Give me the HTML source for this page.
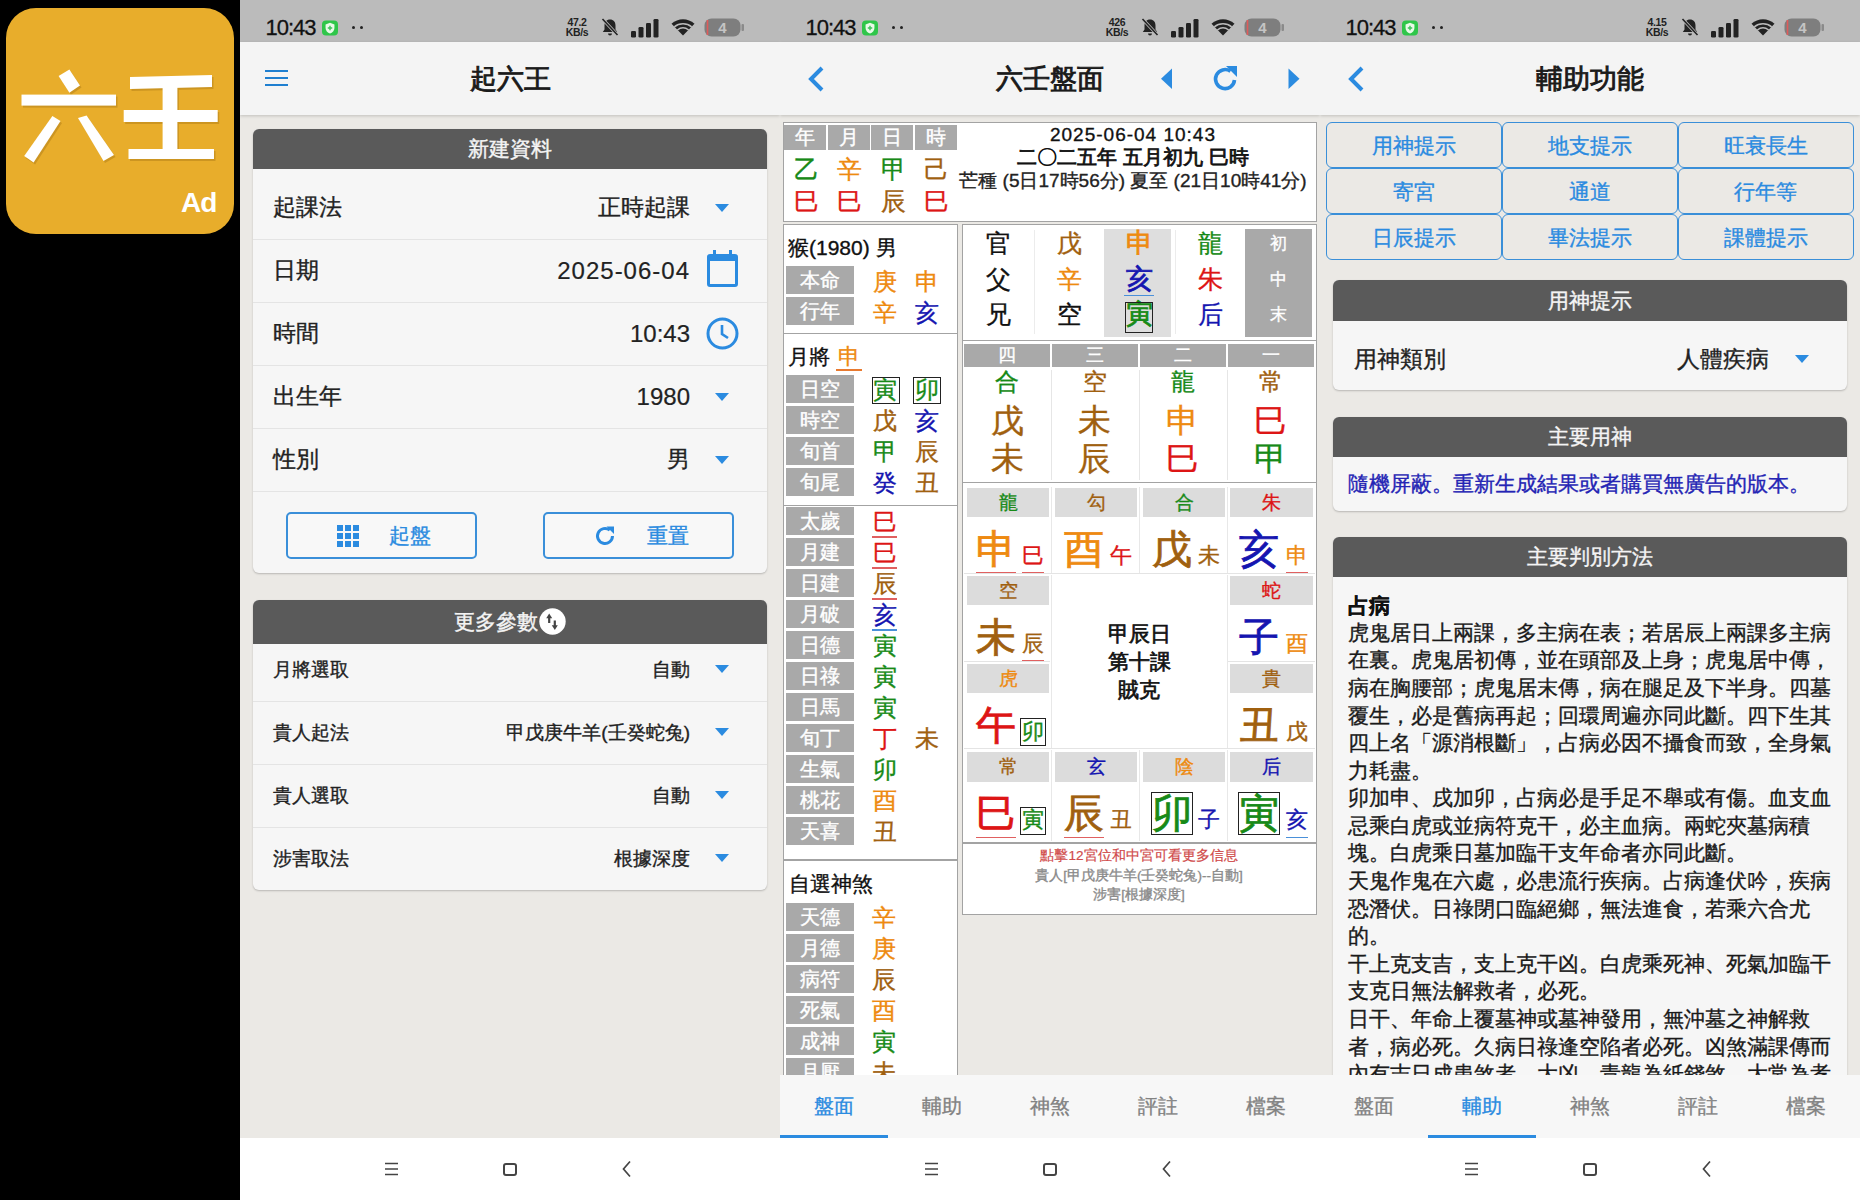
<!DOCTYPE html>
<html><head><meta charset="utf-8">
<style>
*{box-sizing:border-box;margin:0;padding:0}
html,body{width:1860px;height:1200px;overflow:hidden;background:#000;font-family:"Liberation Sans",sans-serif;color:#222}
.abs{position:absolute}
.scr{position:absolute;top:0;width:540px;height:1200px;background:#ebe9e5;overflow:hidden}
.sb{position:absolute;left:0;top:0;width:540px;height:42px;background:#bbbbbb}
.sb .tm{position:absolute;left:25.5px;top:14.8px;font-size:22px;line-height:26px;color:#111;letter-spacing:-1px;-webkit-text-stroke:0.3px #111}
.ab{position:absolute;left:0;top:42px;width:540px;height:73px;background:#f4f4f4;box-shadow:0 1px 3px rgba(0,0,0,.18)}
.ttl{position:absolute;left:0;width:540px;top:20px;text-align:center;font-size:27px;line-height:34px;color:#1a1a1a;-webkit-text-stroke:0.9px #1a1a1a}
.nav{position:absolute;left:0;top:1138px;width:540px;height:62px;background:#fff}
.card{position:absolute;background:#f6f6f6;border-radius:6px;box-shadow:0 1px 2px rgba(0,0,0,.22);overflow:hidden}
.ch{position:absolute;left:0;top:0;width:100%;background:#5a5a5a;color:#f4f4f4;text-align:center;-webkit-text-stroke:0.4px #f4f4f4}
.t{position:absolute;white-space:nowrap;-webkit-text-stroke:0.35px currentColor}
.c{position:absolute;white-space:nowrap;text-align:center;-webkit-text-stroke:0.35px currentColor}
.tri{position:absolute;width:0;height:0;border-left:7.5px solid transparent;border-right:7.5px solid transparent;border-top:8px solid #2b8be0}
.btn{position:absolute;border:2px solid #3a8fd9;border-radius:5px;background:#f8f8f8}
.box{position:absolute;background:#fff;border:1.5px solid #a3a3a3}
.lb{position:absolute;background:#a9a9a9;color:#fff;text-align:center;white-space:nowrap;-webkit-text-stroke:0.4px #fff}
.hl{position:absolute;height:1px;background:#e4e4e4}
</style></head><body>
<div class="abs" style="left:6px;top:8px;width:228px;height:226px;background:#e8ad2b;border-radius:30px"></div>
<svg class="abs" style="left:0;top:0" width="240" height="240" viewBox="0 0 240 240"><g fill="#9a6a10" opacity="0.35" transform="translate(1.5,2)"><polygon points="58.6,76 69.4,69.4 80,85.5 69.4,92.7"/><rect x="21.5" y="94.6" width="94.5" height="11"/><polygon points="52.4,116 60.5,121 33.6,162.6 24.2,156"/><polygon points="78,118 86.6,115.6 114,155 103.5,161"/><polygon points="130,77 212,75 212,87 130,89"/><rect x="123.7" y="110" width="94" height="12"/><rect x="128.5" y="149" width="85.5" height="10"/><rect x="162.6" y="86" width="14.8" height="64"/></g><g fill="#ffffff"><polygon points="58.6,76 69.4,69.4 80,85.5 69.4,92.7"/><rect x="21.5" y="94.6" width="94.5" height="11"/><polygon points="52.4,116 60.5,121 33.6,162.6 24.2,156"/><polygon points="78,118 86.6,115.6 114,155 103.5,161"/><polygon points="130,77 212,75 212,87 130,89"/><rect x="123.7" y="110" width="94" height="12"/><rect x="128.5" y="149" width="85.5" height="10"/><rect x="162.6" y="86" width="14.8" height="64"/></g></svg>
<div class="abs" style="left:181px;top:186px;font-size:28px;line-height:34px;color:#fff;font-weight:bold;letter-spacing:-1px;white-space:nowrap">Ad</div>
<div class="scr" style="left:240px">
<div class="sb"><div class="tm">10:43</div>
<svg class="abs" style="left:82px;top:19.5px" width="16" height="16" viewBox="0 0 18 17"><rect x="0" y="0" width="18" height="17" rx="4.5" fill="#2fc64a"/><path d="M9 2.5 L14 4.5 V8.5 C14 11.5 11.8 13.6 9 14.8 C6.2 13.6 4 11.5 4 8.5 V4.5 Z" fill="#e9fbe9"/><path d="M9 6 V11 M6.5 8.5 H11.5" stroke="#3cc35a" stroke-width="1.6"/></svg>
<div class="abs" style="left:112px;top:26px;width:3px;height:3px;border-radius:2px;background:#222"></div><div class="abs" style="left:120px;top:26px;width:3px;height:3px;border-radius:2px;background:#222"></div>
<div class="abs" style="left:322px;top:18px;width:30px;font-size:10.5px;line-height:9.5px;font-weight:bold;color:#222;text-align:center;letter-spacing:-0.3px">47.2<br>KB/s</div>
<svg class="abs" style="left:360px;top:17px" width="20" height="20" viewBox="0 0 20 20"><path d="M10 2.5 C6.5 2.5 4.5 5 4.5 8.5 V12.5 L2.8 15 H17.2 L15.5 12.5 V8.5 C15.5 5 13.5 2.5 10 2.5 Z" fill="#222"/><path d="M8 16.5 A2 2 0 0 0 12 16.5 Z" fill="#222"/><path d="M2.5 2 L17.5 18" stroke="#bbbbbb" stroke-width="3.2"/><path d="M2.5 2 L17.5 18" stroke="#222" stroke-width="1.6"/></svg>
<svg class="abs" style="left:390px;top:18px" width="30" height="20" viewBox="0 0 30 20"><rect x="1" y="13" width="5" height="6.5" rx="1.3" fill="#222"/><rect x="8.5" y="9" width="5" height="10.5" rx="1.3" fill="#222"/><rect x="16" y="5" width="5" height="14.5" rx="1.3" fill="#222"/><rect x="23.5" y="1" width="5" height="18.5" rx="1.3" fill="#222"/></svg>
<svg class="abs" style="left:431px;top:19px" width="24" height="17" viewBox="0 0 24 17"><path d="M12 16.5 L0.5 4.8 C7 -1.2 17 -1.2 23.5 4.8 Z" fill="#222"/><path d="M3.3 7.8 C8.2 3.8 15.8 3.8 20.7 7.8" fill="none" stroke="#bbbbbb" stroke-width="1.5"/><path d="M6.3 11 C9.8 8.2 14.2 8.2 17.7 11" fill="none" stroke="#bbbbbb" stroke-width="1.5"/></svg>
<svg class="abs" style="left:464px;top:18px" width="41" height="19" viewBox="0 0 41 19"><rect x="0.5" y="0.5" width="36" height="18" rx="7" fill="#7e7e7e"/><path d="M3.5 2 V17" stroke="#e05a5a" stroke-width="1.6"/><rect x="37.5" y="6" width="2.5" height="7" rx="1" fill="#8a8a8a"/><text x="18.5" y="15" font-size="15" font-family="Liberation Sans" font-weight="bold" fill="#c4c4c4" text-anchor="middle">4</text></svg>
</div>
<div class="ab"><div class="ttl">起六王</div><div class="abs" style="left:25px;top:28px;width:23px;height:16px;border-top:2.5px solid #1f7fd0;border-bottom:2.5px solid #1f7fd0"></div><div class="abs" style="left:25px;top:34.7px;width:23px;height:2.5px;background:#1f7fd0"></div></div>
<div class="card" style="left:13px;top:129px;width:514px;height:444px"><div class="ch" style="height:40px;font-size:21px;line-height:40px">新建資料</div></div>
<div class="hl" style="left:13px;top:239px;width:514px"></div>
<div class="hl" style="left:13px;top:302px;width:514px"></div>
<div class="hl" style="left:13px;top:365px;width:514px"></div>
<div class="hl" style="left:13px;top:428px;width:514px"></div>
<div class="hl" style="left:13px;top:491px;width:514px"></div>
<div class="t" style="left:33px;top:196.0px;font-size:23px;line-height:23px;color:#222;">起課法</div>
<div class="t" style="right:90px;top:196.0px;font-size:23px;line-height:23px;color:#222;">正時起課</div>
<div class="tri" style="left:475px;top:203.5px;border-top-color:#2b8be0"></div>
<div class="t" style="left:33px;top:259.0px;font-size:23px;line-height:23px;color:#222;">日期</div>
<div class="t" style="right:90px;top:258.5px;font-size:24px;line-height:24px;color:#222;letter-spacing:1px;-webkit-text-stroke:0.2px #222">2025-06-04</div>
<div class="t" style="left:33px;top:322.0px;font-size:23px;line-height:23px;color:#222;">時間</div>
<div class="t" style="right:90px;top:321.5px;font-size:24px;line-height:24px;color:#222;letter-spacing:0px;-webkit-text-stroke:0.2px #222">10:43</div>
<div class="t" style="left:33px;top:385.0px;font-size:23px;line-height:23px;color:#222;">出生年</div>
<div class="t" style="right:90px;top:384.5px;font-size:24px;line-height:24px;color:#222;letter-spacing:0px;-webkit-text-stroke:0.2px #222">1980</div>
<div class="tri" style="left:475px;top:392.5px;border-top-color:#2b8be0"></div>
<div class="t" style="left:33px;top:448.0px;font-size:23px;line-height:23px;color:#222;">性別</div>
<div class="t" style="right:90px;top:448.0px;font-size:23px;line-height:23px;color:#222;">男</div>
<div class="tri" style="left:475px;top:455.5px;border-top-color:#2b8be0"></div>
<div class="abs" style="left:467px;top:254px;width:31px;height:33px;border:3px solid #2b8be0;border-top-width:7px;border-radius:3px"></div>
<div class="abs" style="left:473px;top:250px;width:3px;height:6px;background:#2b8be0"></div><div class="abs" style="left:489px;top:250px;width:3px;height:6px;background:#2b8be0"></div>
<svg class="abs" style="left:466px;top:317px" width="33" height="33" viewBox="0 0 33 33"><circle cx="16.5" cy="16.5" r="14.5" fill="none" stroke="#2b8be0" stroke-width="3"/><path d="M16 8 V17 L22 21" fill="none" stroke="#2b8be0" stroke-width="2.6"/></svg>
<div class="btn" style="left:46px;top:512px;width:191px;height:47px"></div>
<div class="btn" style="left:303px;top:512px;width:191px;height:47px"></div>
<svg class="abs" style="left:97px;top:525px" width="22" height="22" viewBox="0 0 22 22"><rect x="0" y="0" width="6" height="6" fill="#2b8be0"/><rect x="8" y="0" width="6" height="6" fill="#2b8be0"/><rect x="16" y="0" width="6" height="6" fill="#2b8be0"/><rect x="0" y="8" width="6" height="6" fill="#2b8be0"/><rect x="8" y="8" width="6" height="6" fill="#2b8be0"/><rect x="16" y="8" width="6" height="6" fill="#2b8be0"/><rect x="0" y="16" width="6" height="6" fill="#2b8be0"/><rect x="8" y="16" width="6" height="6" fill="#2b8be0"/><rect x="16" y="16" width="6" height="6" fill="#2b8be0"/></svg>
<div class="t" style="left:149px;top:525.0px;font-size:21px;line-height:21px;color:#2b8be0;">起盤</div>
<svg class="abs" style="left:353px;top:524px" width="24" height="24" viewBox="0 0 24 24"><path d="M19.5 12 A7.5 7.5 0 1 1 16.8 6.2" fill="none" stroke="#2b8be0" stroke-width="3"/><path d="M13.5 2.5 L21 2.5 L21 10 Z" fill="#2b8be0"/></svg>
<div class="t" style="left:407px;top:525.0px;font-size:21px;line-height:21px;color:#2b8be0;">重置</div>
<div class="card" style="left:13px;top:600px;width:514px;height:290px"><div class="ch" style="height:44px;font-size:21px;line-height:44px;padding-right:28px">更多參數</div></div>
<svg class="abs" style="left:299px;top:608px" width="27" height="27" viewBox="0 0 27 27"><circle cx="13.5" cy="13.5" r="13.2" fill="#fff"/><path d="M10.2 9 V15" stroke="#444" stroke-width="2.2"/><path d="M7.2 10.3 L13.2 10.3 L10.2 5.6 Z" fill="#444"/><path d="M15.8 12.5 V18.5" stroke="#444" stroke-width="2.2"/><path d="M12.8 17.2 L18.8 17.2 L15.8 21.9 Z" fill="#444"/></svg>
<div class="hl" style="left:13px;top:701px;width:514px"></div>
<div class="hl" style="left:13px;top:764px;width:514px"></div>
<div class="hl" style="left:13px;top:827px;width:514px"></div>
<div class="t" style="left:33px;top:659.5px;font-size:19px;line-height:19px;color:#222;">月將選取</div>
<div class="t" style="right:90px;top:659.5px;font-size:19px;line-height:19px;color:#222;">自動</div>
<div class="tri" style="left:475px;top:665px;border-top-color:#2b8be0"></div>
<div class="t" style="left:33px;top:722.5px;font-size:19px;line-height:19px;color:#222;">貴人起法</div>
<div class="t" style="right:90px;top:722.5px;font-size:19px;line-height:19px;color:#222;">甲戊庚牛羊(壬癸蛇兔)</div>
<div class="tri" style="left:475px;top:728px;border-top-color:#2b8be0"></div>
<div class="t" style="left:33px;top:785.5px;font-size:19px;line-height:19px;color:#222;">貴人選取</div>
<div class="t" style="right:90px;top:785.5px;font-size:19px;line-height:19px;color:#222;">自動</div>
<div class="tri" style="left:475px;top:791px;border-top-color:#2b8be0"></div>
<div class="t" style="left:33px;top:848.5px;font-size:19px;line-height:19px;color:#222;">涉害取法</div>
<div class="t" style="right:90px;top:848.5px;font-size:19px;line-height:19px;color:#222;">根據深度</div>
<div class="tri" style="left:475px;top:854px;border-top-color:#2b8be0"></div>
<div class="nav">
<svg class="abs" style="left:144px;top:24px" width="15" height="14" viewBox="0 0 15 14"><path d="M1 1.5 H14 M1 7 H14 M1 12.5 H14" stroke="#444" stroke-width="1.6"/></svg>
<div class="abs" style="left:263px;top:25px;width:14px;height:13px;border:2px solid #444;border-radius:3px"></div>
<svg class="abs" style="left:381px;top:22px" width="11" height="18" viewBox="0 0 11 18"><path d="M9 1.5 L2.5 9 L9 16.5" fill="none" stroke="#444" stroke-width="1.7"/></svg>
</div>
</div>
<div class="scr" style="left:780px">
<div class="sb"><div class="tm">10:43</div>
<svg class="abs" style="left:82px;top:19.5px" width="16" height="16" viewBox="0 0 18 17"><rect x="0" y="0" width="18" height="17" rx="4.5" fill="#2fc64a"/><path d="M9 2.5 L14 4.5 V8.5 C14 11.5 11.8 13.6 9 14.8 C6.2 13.6 4 11.5 4 8.5 V4.5 Z" fill="#e9fbe9"/><path d="M9 6 V11 M6.5 8.5 H11.5" stroke="#3cc35a" stroke-width="1.6"/></svg>
<div class="abs" style="left:112px;top:26px;width:3px;height:3px;border-radius:2px;background:#222"></div><div class="abs" style="left:120px;top:26px;width:3px;height:3px;border-radius:2px;background:#222"></div>
<div class="abs" style="left:322px;top:18px;width:30px;font-size:10.5px;line-height:9.5px;font-weight:bold;color:#222;text-align:center;letter-spacing:-0.3px">426<br>KB/s</div>
<svg class="abs" style="left:360px;top:17px" width="20" height="20" viewBox="0 0 20 20"><path d="M10 2.5 C6.5 2.5 4.5 5 4.5 8.5 V12.5 L2.8 15 H17.2 L15.5 12.5 V8.5 C15.5 5 13.5 2.5 10 2.5 Z" fill="#222"/><path d="M8 16.5 A2 2 0 0 0 12 16.5 Z" fill="#222"/><path d="M2.5 2 L17.5 18" stroke="#bbbbbb" stroke-width="3.2"/><path d="M2.5 2 L17.5 18" stroke="#222" stroke-width="1.6"/></svg>
<svg class="abs" style="left:390px;top:18px" width="30" height="20" viewBox="0 0 30 20"><rect x="1" y="13" width="5" height="6.5" rx="1.3" fill="#222"/><rect x="8.5" y="9" width="5" height="10.5" rx="1.3" fill="#222"/><rect x="16" y="5" width="5" height="14.5" rx="1.3" fill="#222"/><rect x="23.5" y="1" width="5" height="18.5" rx="1.3" fill="#222"/></svg>
<svg class="abs" style="left:431px;top:19px" width="24" height="17" viewBox="0 0 24 17"><path d="M12 16.5 L0.5 4.8 C7 -1.2 17 -1.2 23.5 4.8 Z" fill="#222"/><path d="M3.3 7.8 C8.2 3.8 15.8 3.8 20.7 7.8" fill="none" stroke="#bbbbbb" stroke-width="1.5"/><path d="M6.3 11 C9.8 8.2 14.2 8.2 17.7 11" fill="none" stroke="#bbbbbb" stroke-width="1.5"/></svg>
<svg class="abs" style="left:464px;top:18px" width="41" height="19" viewBox="0 0 41 19"><rect x="0.5" y="0.5" width="36" height="18" rx="7" fill="#7e7e7e"/><path d="M3.5 2 V17" stroke="#e05a5a" stroke-width="1.6"/><rect x="37.5" y="6" width="2.5" height="7" rx="1" fill="#8a8a8a"/><text x="18.5" y="15" font-size="15" font-family="Liberation Sans" font-weight="bold" fill="#c4c4c4" text-anchor="middle">4</text></svg>
</div>
<div class="ab"><div class="ttl">六壬盤面</div><svg class="abs" style="left:26px;top:23px" width="20" height="28" viewBox="0 0 20 28"><path d="M16 3 L5 14 L16 25" fill="none" stroke="#2b8be0" stroke-width="4"/></svg><svg class="abs" style="left:380px;top:25px" width="14" height="24" viewBox="0 0 14 24"><path d="M12 1.5 V22 L1 11.75 Z" fill="#2b8be0"/></svg><svg class="abs" style="left:431px;top:22px" width="29" height="30" viewBox="0 0 29 30"><path d="M23.5 16 A9.5 9.5 0 1 1 19.5 7.3" fill="none" stroke="#2b8be0" stroke-width="3.6"/><path d="M15 2 L26 2 L26 13 Z" fill="#2b8be0"/></svg><svg class="abs" style="left:507px;top:25px" width="14" height="24" viewBox="0 0 14 24"><path d="M1.5 1.5 V22 L12.5 11.75 Z" fill="#2b8be0"/></svg></div>
<div class="box" style="left:3px;top:122px;width:534px;height:100px"></div>
<div class="lb" style="left:4px;top:125px;width:42px;height:24.5px;font-size:20px;line-height:25px">年</div>
<div class="lb" style="left:48px;top:125px;width:41.5px;height:24.5px;font-size:20px;line-height:25px">月</div>
<div class="lb" style="left:91.2px;top:125px;width:41.8px;height:24.5px;font-size:20px;line-height:25px">日</div>
<div class="lb" style="left:135px;top:125px;width:41.8px;height:24.5px;font-size:20px;line-height:25px">時</div>
<div class="c" style="left:-11.5px;width:75px;top:157.0px;font-size:25px;line-height:25px;color:#178a17;">乙</div>
<div class="c" style="left:31.5px;width:75px;top:157.0px;font-size:25px;line-height:25px;color:#ee8a10;">辛</div>
<div class="c" style="left:75.5px;width:75px;top:157.0px;font-size:25px;line-height:25px;color:#178a17;">甲</div>
<div class="c" style="left:119.0px;width:75px;top:157.0px;font-size:25px;line-height:25px;color:#a0600f;">己</div>
<div class="c" style="left:-11.5px;width:75px;top:188.5px;font-size:25px;line-height:25px;color:#dd1515;">巳</div>
<div class="c" style="left:31.5px;width:75px;top:188.5px;font-size:25px;line-height:25px;color:#dd1515;">巳</div>
<div class="c" style="left:75.5px;width:75px;top:188.5px;font-size:25px;line-height:25px;color:#a0600f;">辰</div>
<div class="c" style="left:119.0px;width:75px;top:188.5px;font-size:25px;line-height:25px;color:#dd1515;">巳</div>
<div class="c" style="left:183.0px;width:340px;top:124.5px;font-size:19px;line-height:19px;color:#111;letter-spacing:1px">2025-06-04 10:43</div>
<div class="c" style="left:183.0px;width:340px;top:147.0px;font-size:20px;line-height:20px;color:#111;-webkit-text-stroke:0.8px #111">二〇二五年 五月初九 巳時</div>
<div class="c" style="left:173.0px;width:360px;top:171.0px;font-size:19px;line-height:19px;color:#222;letter-spacing:0px">芒種 (5日17時56分) 夏至 (21日10時41分)</div>
<div class="box" style="left:3px;top:224px;width:175px;height:1000px"></div>
<div class="abs" style="left:3px;top:332.5px;width:175px;height:1.6px;background:#a3a3a3"></div>
<div class="abs" style="left:3px;top:504.5px;width:175px;height:1.6px;background:#a3a3a3"></div>
<div class="abs" style="left:3px;top:859px;width:175px;height:1.6px;background:#a3a3a3"></div>
<div class="t" style="left:8px;top:236.5px;font-size:21px;line-height:21px;color:#111;">猴(1980) 男</div>
<div class="lb" style="left:6px;top:266px;width:68px;height:28px;font-size:20px;line-height:28px">本命</div><div class="lb" style="left:6px;top:297px;width:68px;height:28px;font-size:20px;line-height:28px">行年</div>
<div class="c" style="left:69.0px;width:72px;top:270.0px;font-size:24px;line-height:24px;color:#ee8a10;">庚</div><div class="c" style="left:110.6px;width:72px;top:270.0px;font-size:24px;line-height:24px;color:#ee8a10;">申</div><div class="c" style="left:69.0px;width:72px;top:301.0px;font-size:24px;line-height:24px;color:#ee8a10;">辛</div><div class="c" style="left:110.6px;width:72px;top:301.0px;font-size:24px;line-height:24px;color:#1515b0;">亥</div>
<div class="t" style="left:8px;top:346.1px;font-size:21px;line-height:21px;color:#111;">月將</div><div class="c" style="left:35.5px;width:66px;top:345.6px;font-size:22px;line-height:22px;color:#ee8a10;">申</div><div class="abs" style="left:55.5px;top:369px;width:26px;height:1.6px;background:#e87a30"></div>
<div class="lb" style="left:6px;top:375px;width:68px;height:28px;font-size:20px;line-height:28px">日空</div><div class="c" style="left:69.0px;width:72px;top:378.0px;font-size:24px;line-height:24px;color:#178a17;">寅</div><div class="c" style="left:110.6px;width:72px;top:378.0px;font-size:24px;line-height:24px;color:#178a17;">卯</div>
<div class="lb" style="left:6px;top:406px;width:68px;height:28px;font-size:20px;line-height:28px">時空</div><div class="c" style="left:69.0px;width:72px;top:409.0px;font-size:24px;line-height:24px;color:#a0600f;">戊</div><div class="c" style="left:110.6px;width:72px;top:409.0px;font-size:24px;line-height:24px;color:#1515b0;">亥</div>
<div class="lb" style="left:6px;top:437px;width:68px;height:28px;font-size:20px;line-height:28px">旬首</div><div class="c" style="left:69.0px;width:72px;top:440.0px;font-size:24px;line-height:24px;color:#178a17;">甲</div><div class="c" style="left:110.6px;width:72px;top:440.0px;font-size:24px;line-height:24px;color:#a0600f;">辰</div>
<div class="lb" style="left:6px;top:468px;width:68px;height:28px;font-size:20px;line-height:28px">旬尾</div><div class="c" style="left:69.0px;width:72px;top:471.0px;font-size:24px;line-height:24px;color:#1515b0;">癸</div><div class="c" style="left:110.6px;width:72px;top:471.0px;font-size:24px;line-height:24px;color:#a0600f;">丑</div>
<div class="abs" style="left:91.5px;top:376.5px;width:28px;height:27px;border:1.5px solid #222"></div><div class="abs" style="left:133px;top:376.5px;width:28px;height:27px;border:1.5px solid #222"></div>
<div class="lb" style="left:6px;top:507px;width:68px;height:28px;font-size:20px;line-height:28px">太歲</div><div class="c" style="left:68.8px;width:72px;top:510.0px;font-size:24px;line-height:24px;color:#dd1515;">巳</div>
<div class="abs" style="left:92.3px;top:536px;width:25px;height:1.6px;background:#e06060"></div>
<div class="lb" style="left:6px;top:538px;width:68px;height:28px;font-size:20px;line-height:28px">月建</div><div class="c" style="left:68.8px;width:72px;top:541.0px;font-size:24px;line-height:24px;color:#dd1515;">巳</div>
<div class="abs" style="left:92.3px;top:567px;width:25px;height:1.6px;background:#e06060"></div>
<div class="lb" style="left:6px;top:569px;width:68px;height:28px;font-size:20px;line-height:28px">日建</div><div class="c" style="left:68.8px;width:72px;top:572.0px;font-size:24px;line-height:24px;color:#a0600f;">辰</div>
<div class="abs" style="left:92.3px;top:598px;width:25px;height:1.6px;background:#e06060"></div>
<div class="lb" style="left:6px;top:600px;width:68px;height:28px;font-size:20px;line-height:28px">月破</div><div class="c" style="left:68.8px;width:72px;top:603.0px;font-size:24px;line-height:24px;color:#1515b0;">亥</div>
<div class="abs" style="left:92.3px;top:629px;width:25px;height:1.6px;background:#4a90d9"></div>
<div class="lb" style="left:6px;top:631px;width:68px;height:28px;font-size:20px;line-height:28px">日德</div><div class="c" style="left:68.8px;width:72px;top:634.0px;font-size:24px;line-height:24px;color:#178a17;">寅</div>
<div class="lb" style="left:6px;top:662px;width:68px;height:28px;font-size:20px;line-height:28px">日祿</div><div class="c" style="left:68.8px;width:72px;top:665.0px;font-size:24px;line-height:24px;color:#178a17;">寅</div>
<div class="lb" style="left:6px;top:693px;width:68px;height:28px;font-size:20px;line-height:28px">日馬</div><div class="c" style="left:68.8px;width:72px;top:696.0px;font-size:24px;line-height:24px;color:#178a17;">寅</div>
<div class="lb" style="left:6px;top:724px;width:68px;height:28px;font-size:20px;line-height:28px">旬丁</div><div class="c" style="left:68.8px;width:72px;top:727.0px;font-size:24px;line-height:24px;color:#dd1515;">丁</div>
<div class="lb" style="left:6px;top:755px;width:68px;height:28px;font-size:20px;line-height:28px">生氣</div><div class="c" style="left:68.8px;width:72px;top:758.0px;font-size:24px;line-height:24px;color:#178a17;">卯</div>
<div class="lb" style="left:6px;top:786px;width:68px;height:28px;font-size:20px;line-height:28px">桃花</div><div class="c" style="left:68.8px;width:72px;top:789.0px;font-size:24px;line-height:24px;color:#ee8a10;">酉</div>
<div class="lb" style="left:6px;top:817px;width:68px;height:28px;font-size:20px;line-height:28px">天喜</div><div class="c" style="left:68.8px;width:72px;top:820.0px;font-size:24px;line-height:24px;color:#a0600f;">丑</div>
<div class="c" style="left:110.5px;width:72px;top:727.0px;font-size:24px;line-height:24px;color:#a0600f;">未</div>
<div class="t" style="left:9px;top:873.0px;font-size:21px;line-height:21px;color:#111;">自選神煞</div>
<div class="lb" style="left:6px;top:903px;width:68px;height:28px;font-size:20px;line-height:28px">天德</div><div class="c" style="left:68.4px;width:72px;top:906.0px;font-size:24px;line-height:24px;color:#ee8a10;">辛</div>
<div class="lb" style="left:6px;top:934px;width:68px;height:28px;font-size:20px;line-height:28px">月德</div><div class="c" style="left:68.4px;width:72px;top:937.0px;font-size:24px;line-height:24px;color:#ee8a10;">庚</div>
<div class="lb" style="left:6px;top:965px;width:68px;height:28px;font-size:20px;line-height:28px">病符</div><div class="c" style="left:68.4px;width:72px;top:968.0px;font-size:24px;line-height:24px;color:#a0600f;">辰</div>
<div class="lb" style="left:6px;top:996px;width:68px;height:28px;font-size:20px;line-height:28px">死氣</div><div class="c" style="left:68.4px;width:72px;top:999.0px;font-size:24px;line-height:24px;color:#ee8a10;">酉</div>
<div class="lb" style="left:6px;top:1027px;width:68px;height:28px;font-size:20px;line-height:28px">成神</div><div class="c" style="left:68.4px;width:72px;top:1030.0px;font-size:24px;line-height:24px;color:#178a17;">寅</div>
<div class="lb" style="left:6px;top:1058px;width:68px;height:28px;font-size:20px;line-height:28px">月厭</div><div class="c" style="left:68.4px;width:72px;top:1061.0px;font-size:24px;line-height:24px;color:#a0600f;">未</div>
<div class="box" style="left:182px;top:224px;width:355px;height:691px"></div>
<div class="abs" style="left:324px;top:228.5px;width:67px;height:108px;background:#dedede"></div><div class="abs" style="left:464.5px;top:228.5px;width:67px;height:108px;background:#a9a9a9"></div>
<div class="abs" style="left:254px;top:230px;width:1px;height:104px;background:#ececec"></div><div class="abs" style="left:395px;top:230px;width:1px;height:104px;background:#ececec"></div>
<div class="c" style="left:181.4px;width:75px;top:231.1px;font-size:25px;line-height:25px;color:#111;">官</div>
<div class="c" style="left:252.3px;width:75px;top:231.1px;font-size:25px;line-height:25px;color:#a0600f;">戊</div>
<div class="c" style="left:318.5px;width:81px;top:230.1px;font-size:27px;line-height:27px;color:#ee8a10;-webkit-text-stroke:0.8px #ee8a10">申</div>
<div class="c" style="left:392.9px;width:75px;top:231.1px;font-size:25px;line-height:25px;color:#178a17;">龍</div>
<div class="c" style="left:181.4px;width:75px;top:267.1px;font-size:25px;line-height:25px;color:#111;">父</div>
<div class="c" style="left:252.3px;width:75px;top:267.1px;font-size:25px;line-height:25px;color:#ee8a10;">辛</div>
<div class="c" style="left:318.5px;width:81px;top:266.1px;font-size:27px;line-height:27px;color:#1515b0;-webkit-text-stroke:0.8px #1515b0">亥</div>
<div class="c" style="left:392.9px;width:75px;top:267.1px;font-size:25px;line-height:25px;color:#dd1515;">朱</div>
<div class="c" style="left:181.4px;width:75px;top:302.0px;font-size:25px;line-height:25px;color:#111;">兄</div>
<div class="c" style="left:252.3px;width:75px;top:302.0px;font-size:25px;line-height:25px;color:#111;">空</div>
<div class="c" style="left:318.5px;width:81px;top:301.0px;font-size:27px;line-height:27px;color:#178a17;-webkit-text-stroke:0.8px #178a17">寅</div>
<div class="c" style="left:392.9px;width:75px;top:302.0px;font-size:25px;line-height:25px;color:#1515b0;">后</div>
<div class="abs" style="left:344.0px;top:294.5px;width:30px;height:1.6px;background:#4a90d9"></div>
<div class="abs" style="left:345px;top:301.5px;width:28px;height:31px;border:1.5px solid #222"></div>
<div class="c" style="left:472.5px;width:51px;top:235.1px;font-size:17px;line-height:17px;color:#fff;">初</div>
<div class="c" style="left:472.5px;width:51px;top:271.1px;font-size:17px;line-height:17px;color:#fff;">中</div>
<div class="c" style="left:472.5px;width:51px;top:306.0px;font-size:17px;line-height:17px;color:#fff;">末</div>
<div class="abs" style="left:182px;top:339.5px;width:355px;height:1.6px;background:#a3a3a3"></div>
<div class="lb" style="left:184px;top:344px;width:86px;height:23px;font-size:18px;line-height:23px">四</div>
<div class="lb" style="left:271.5px;top:344px;width:86px;height:23px;font-size:18px;line-height:23px">三</div>
<div class="lb" style="left:359.5px;top:344px;width:86px;height:23px;font-size:18px;line-height:23px">二</div>
<div class="lb" style="left:447.5px;top:344px;width:86px;height:23px;font-size:18px;line-height:23px">一</div>
<div class="c" style="left:191.0px;width:72px;top:370.0px;font-size:24px;line-height:24px;color:#178a17;">合</div><div class="c" style="left:177.5px;width:99px;top:403.5px;font-size:33px;line-height:33px;color:#a0600f;">戊</div><div class="c" style="left:177.5px;width:99px;top:442.0px;font-size:33px;line-height:33px;color:#a0600f;">未</div>
<div class="c" style="left:278.5px;width:72px;top:370.0px;font-size:24px;line-height:24px;color:#a0600f;">空</div><div class="c" style="left:265.0px;width:99px;top:403.5px;font-size:33px;line-height:33px;color:#a0600f;">未</div><div class="c" style="left:265.0px;width:99px;top:442.0px;font-size:33px;line-height:33px;color:#a0600f;">辰</div>
<div class="c" style="left:366.5px;width:72px;top:370.0px;font-size:24px;line-height:24px;color:#178a17;">龍</div><div class="c" style="left:353.0px;width:99px;top:403.5px;font-size:33px;line-height:33px;color:#ee8a10;">申</div><div class="c" style="left:353.0px;width:99px;top:442.0px;font-size:33px;line-height:33px;color:#dd1515;">巳</div>
<div class="c" style="left:454.5px;width:72px;top:370.0px;font-size:24px;line-height:24px;color:#a0600f;">常</div><div class="c" style="left:441.0px;width:99px;top:403.5px;font-size:33px;line-height:33px;color:#dd1515;">巳</div><div class="c" style="left:441.0px;width:99px;top:442.0px;font-size:33px;line-height:33px;color:#178a17;">甲</div>
<div class="abs" style="left:270.5px;top:370px;width:1px;height:110px;background:#e6e6e6"></div>
<div class="abs" style="left:358.5px;top:370px;width:1px;height:110px;background:#e6e6e6"></div>
<div class="abs" style="left:446.5px;top:370px;width:1px;height:110px;background:#e6e6e6"></div>
<div class="abs" style="left:182px;top:481.5px;width:355px;height:1.6px;background:#a3a3a3"></div>
<div class="abs" style="left:186.7px;top:487.5px;width:82.5px;height:29.5px;background:#dcdcdc"></div><div class="c" style="left:199.5px;width:57px;top:492.8px;font-size:19px;line-height:19px;color:#178a17;">龍</div><div class="c" style="left:155.7px;width:120px;top:528.8px;font-size:40px;line-height:40px;color:#ee8a10;-webkit-text-stroke:0.8px #ee8a10">申</div><div class="c" style="left:220.0px;width:66px;top:544.8px;font-size:22px;line-height:22px;color:#dd1515;">巳</div><div class="abs" style="left:195.7px;top:572.0px;width:40px;height:1.6px;background:#e06060"></div><div class="abs" style="left:242.0px;top:572.0px;width:22px;height:1.6px;background:#e06060"></div>
<div class="abs" style="left:274.9px;top:487.5px;width:82.5px;height:29.5px;background:#dcdcdc"></div><div class="c" style="left:287.7px;width:57px;top:492.8px;font-size:19px;line-height:19px;color:#a0600f;">勾</div><div class="c" style="left:243.9px;width:120px;top:528.8px;font-size:40px;line-height:40px;color:#ee8a10;-webkit-text-stroke:0.8px #ee8a10">酉</div><div class="c" style="left:308.2px;width:66px;top:544.8px;font-size:22px;line-height:22px;color:#dd1515;">午</div>
<div class="abs" style="left:362.9px;top:487.5px;width:82.5px;height:29.5px;background:#dcdcdc"></div><div class="c" style="left:375.7px;width:57px;top:492.8px;font-size:19px;line-height:19px;color:#178a17;">合</div><div class="c" style="left:331.9px;width:120px;top:528.8px;font-size:40px;line-height:40px;color:#a0600f;-webkit-text-stroke:0.8px #a0600f">戊</div><div class="c" style="left:396.2px;width:66px;top:544.8px;font-size:22px;line-height:22px;color:#a0600f;">未</div>
<div class="abs" style="left:450.4px;top:487.5px;width:82.5px;height:29.5px;background:#dcdcdc"></div><div class="c" style="left:463.2px;width:57px;top:492.8px;font-size:19px;line-height:19px;color:#dd1515;">朱</div><div class="c" style="left:419.4px;width:120px;top:528.8px;font-size:40px;line-height:40px;color:#1515b0;-webkit-text-stroke:0.8px #1515b0">亥</div><div class="c" style="left:483.7px;width:66px;top:544.8px;font-size:22px;line-height:22px;color:#ee8a10;">申</div><div class="abs" style="left:505.70000000000005px;top:572.0px;width:22px;height:1.6px;background:#e06060"></div>
<div class="abs" style="left:186.7px;top:575.5px;width:82.5px;height:29.5px;background:#dcdcdc"></div><div class="c" style="left:199.5px;width:57px;top:580.8px;font-size:19px;line-height:19px;color:#a0600f;">空</div><div class="c" style="left:155.7px;width:120px;top:616.8px;font-size:40px;line-height:40px;color:#a0600f;-webkit-text-stroke:0.8px #a0600f">未</div><div class="c" style="left:220.0px;width:66px;top:632.8px;font-size:22px;line-height:22px;color:#a0600f;">辰</div><div class="abs" style="left:242.0px;top:660.0px;width:22px;height:1.6px;background:#e06060"></div>
<div class="abs" style="left:450.4px;top:575.5px;width:82.5px;height:29.5px;background:#dcdcdc"></div><div class="c" style="left:463.2px;width:57px;top:580.8px;font-size:19px;line-height:19px;color:#dd1515;">蛇</div><div class="c" style="left:419.4px;width:120px;top:616.8px;font-size:40px;line-height:40px;color:#1515b0;-webkit-text-stroke:0.8px #1515b0">子</div><div class="c" style="left:483.7px;width:66px;top:632.8px;font-size:22px;line-height:22px;color:#ee8a10;">酉</div>
<div class="abs" style="left:186.7px;top:663.5px;width:82.5px;height:29.5px;background:#dcdcdc"></div><div class="c" style="left:199.5px;width:57px;top:668.8px;font-size:19px;line-height:19px;color:#ee8a10;">虎</div><div class="c" style="left:155.7px;width:120px;top:704.8px;font-size:40px;line-height:40px;color:#dd1515;-webkit-text-stroke:0.8px #dd1515">午</div><div class="c" style="left:220.0px;width:66px;top:720.8px;font-size:22px;line-height:22px;color:#178a17;">卯</div><div class="abs" style="left:240.0px;top:718.3px;width:26px;height:28px;border:1.5px solid #222"></div>
<div class="abs" style="left:450.4px;top:663.5px;width:82.5px;height:29.5px;background:#dcdcdc"></div><div class="c" style="left:463.2px;width:57px;top:668.8px;font-size:19px;line-height:19px;color:#a0600f;">貴</div><div class="c" style="left:419.4px;width:120px;top:704.8px;font-size:40px;line-height:40px;color:#a0600f;-webkit-text-stroke:0.8px #a0600f">丑</div><div class="c" style="left:483.7px;width:66px;top:720.8px;font-size:22px;line-height:22px;color:#a0600f;">戊</div>
<div class="abs" style="left:186.7px;top:752px;width:82.5px;height:29.5px;background:#dcdcdc"></div><div class="c" style="left:199.5px;width:57px;top:757.3px;font-size:19px;line-height:19px;color:#a0600f;">常</div><div class="c" style="left:155.7px;width:120px;top:793.3px;font-size:40px;line-height:40px;color:#dd1515;-webkit-text-stroke:0.8px #dd1515">巳</div><div class="c" style="left:220.0px;width:66px;top:809.3px;font-size:22px;line-height:22px;color:#178a17;">寅</div><div class="abs" style="left:195.7px;top:836.5px;width:40px;height:1.6px;background:#e06060"></div><div class="abs" style="left:240.0px;top:806.8px;width:26px;height:28px;border:1.5px solid #222"></div>
<div class="abs" style="left:274.9px;top:752px;width:82.5px;height:29.5px;background:#dcdcdc"></div><div class="c" style="left:287.7px;width:57px;top:757.3px;font-size:19px;line-height:19px;color:#1515b0;">玄</div><div class="c" style="left:243.9px;width:120px;top:793.3px;font-size:40px;line-height:40px;color:#a0600f;-webkit-text-stroke:0.8px #a0600f">辰</div><div class="c" style="left:308.2px;width:66px;top:809.3px;font-size:22px;line-height:22px;color:#a0600f;">丑</div><div class="abs" style="left:283.9px;top:836.5px;width:40px;height:1.6px;background:#e06060"></div>
<div class="abs" style="left:362.9px;top:752px;width:82.5px;height:29.5px;background:#dcdcdc"></div><div class="c" style="left:375.7px;width:57px;top:757.3px;font-size:19px;line-height:19px;color:#ee8a10;">陰</div><div class="c" style="left:331.9px;width:120px;top:793.3px;font-size:40px;line-height:40px;color:#178a17;-webkit-text-stroke:0.8px #178a17">卯</div><div class="c" style="left:396.2px;width:66px;top:809.3px;font-size:22px;line-height:22px;color:#1515b0;">子</div><div class="abs" style="left:370.9px;top:792.3px;width:42px;height:43px;border:1.5px solid #222"></div>
<div class="abs" style="left:450.4px;top:752px;width:82.5px;height:29.5px;background:#dcdcdc"></div><div class="c" style="left:463.2px;width:57px;top:757.3px;font-size:19px;line-height:19px;color:#1515b0;">后</div><div class="c" style="left:419.4px;width:120px;top:793.3px;font-size:40px;line-height:40px;color:#178a17;-webkit-text-stroke:0.8px #178a17">寅</div><div class="c" style="left:483.7px;width:66px;top:809.3px;font-size:22px;line-height:22px;color:#1515b0;">亥</div><div class="abs" style="left:505.70000000000005px;top:836.5px;width:22px;height:1.6px;background:#4a90d9"></div><div class="abs" style="left:458.4px;top:792.3px;width:42px;height:43px;border:1.5px solid #222"></div>
<div class="abs" style="left:184px;top:573px;width:86px;height:1.2px;background:#e4e4e4"></div><div class="abs" style="left:447px;top:573px;width:88px;height:1.2px;background:#e4e4e4"></div>
<div class="abs" style="left:184px;top:660.5px;width:86px;height:1.2px;background:#e4e4e4"></div><div class="abs" style="left:447px;top:660.5px;width:88px;height:1.2px;background:#e4e4e4"></div>
<div class="abs" style="left:184px;top:748px;width:86px;height:1.2px;background:#e4e4e4"></div><div class="abs" style="left:447px;top:748px;width:88px;height:1.2px;background:#e4e4e4"></div>
<div class="abs" style="left:184px;top:573px;width:351px;height:1.2px;background:#e4e4e4"></div><div class="abs" style="left:184px;top:748px;width:351px;height:1.2px;background:#e4e4e4"></div>
<div class="abs" style="left:271px;top:487px;width:1px;height:86px;background:#e8e8e8"></div><div class="abs" style="left:271px;top:750px;width:1px;height:91px;background:#e8e8e8"></div>
<div class="abs" style="left:358.5px;top:487px;width:1px;height:86px;background:#e8e8e8"></div><div class="abs" style="left:358.5px;top:750px;width:1px;height:91px;background:#e8e8e8"></div>
<div class="abs" style="left:446.5px;top:487px;width:1px;height:86px;background:#e8e8e8"></div><div class="abs" style="left:446.5px;top:750px;width:1px;height:91px;background:#e8e8e8"></div>
<div class="abs" style="left:271px;top:575px;width:1px;height:173px;background:#e8e8e8"></div><div class="abs" style="left:446.5px;top:575px;width:1px;height:173px;background:#e8e8e8"></div>
<div class="c" style="left:299.4px;width:120px;top:622.5px;font-size:21px;line-height:21px;color:#111;-webkit-text-stroke:0.7px #111">甲辰日</div><div class="c" style="left:299.4px;width:120px;top:650.5px;font-size:21px;line-height:21px;color:#111;-webkit-text-stroke:0.7px #111">第十課</div><div class="c" style="left:299.4px;width:120px;top:678.5px;font-size:21px;line-height:21px;color:#111;-webkit-text-stroke:0.7px #111">賊克</div>
<div class="abs" style="left:182px;top:842px;width:355px;height:1.6px;background:#a3a3a3"></div>
<div class="c" style="left:209.0px;width:300px;top:849.2px;font-size:13.5px;line-height:13.5px;color:#d04a4a;-webkit-text-stroke:0.2px #d04a4a">點擊12宮位和中宮可看更多信息</div>
<div class="c" style="left:209.0px;width:300px;top:868.6px;font-size:13.5px;line-height:13.5px;color:#8a8a8a;">貴人[甲戊庚牛羊(壬癸蛇兔)--自動]</div>
<div class="c" style="left:209.0px;width:300px;top:888.2px;font-size:13.5px;line-height:13.5px;color:#8a8a8a;">涉害[根據深度]</div>
<div class="abs" style="left:0px;top:1075px;width:540px;height:63px;background:#f7f7f7"></div>
<div class="c" style="left:4.0px;width:100px;top:1095.5px;font-size:20px;line-height:20px;color:#2b8be0;">盤面</div>
<div class="c" style="left:112.0px;width:100px;top:1095.5px;font-size:20px;line-height:20px;color:#828282;">輔助</div>
<div class="c" style="left:220.0px;width:100px;top:1095.5px;font-size:20px;line-height:20px;color:#828282;">神煞</div>
<div class="c" style="left:328.0px;width:100px;top:1095.5px;font-size:20px;line-height:20px;color:#828282;">評註</div>
<div class="c" style="left:436.0px;width:100px;top:1095.5px;font-size:20px;line-height:20px;color:#828282;">檔案</div>
<div class="abs" style="left:0px;top:1135px;width:108px;height:3px;background:#2b8be0"></div>
<div class="nav">
<svg class="abs" style="left:144px;top:24px" width="15" height="14" viewBox="0 0 15 14"><path d="M1 1.5 H14 M1 7 H14 M1 12.5 H14" stroke="#444" stroke-width="1.6"/></svg>
<div class="abs" style="left:263px;top:25px;width:14px;height:13px;border:2px solid #444;border-radius:3px"></div>
<svg class="abs" style="left:381px;top:22px" width="11" height="18" viewBox="0 0 11 18"><path d="M9 1.5 L2.5 9 L9 16.5" fill="none" stroke="#444" stroke-width="1.7"/></svg>
</div>
</div>
<div class="scr" style="left:1320px">
<div class="sb"><div class="tm">10:43</div>
<svg class="abs" style="left:82px;top:19.5px" width="16" height="16" viewBox="0 0 18 17"><rect x="0" y="0" width="18" height="17" rx="4.5" fill="#2fc64a"/><path d="M9 2.5 L14 4.5 V8.5 C14 11.5 11.8 13.6 9 14.8 C6.2 13.6 4 11.5 4 8.5 V4.5 Z" fill="#e9fbe9"/><path d="M9 6 V11 M6.5 8.5 H11.5" stroke="#3cc35a" stroke-width="1.6"/></svg>
<div class="abs" style="left:112px;top:26px;width:3px;height:3px;border-radius:2px;background:#222"></div><div class="abs" style="left:120px;top:26px;width:3px;height:3px;border-radius:2px;background:#222"></div>
<div class="abs" style="left:322px;top:18px;width:30px;font-size:10.5px;line-height:9.5px;font-weight:bold;color:#222;text-align:center;letter-spacing:-0.3px">4.15<br>KB/s</div>
<svg class="abs" style="left:360px;top:17px" width="20" height="20" viewBox="0 0 20 20"><path d="M10 2.5 C6.5 2.5 4.5 5 4.5 8.5 V12.5 L2.8 15 H17.2 L15.5 12.5 V8.5 C15.5 5 13.5 2.5 10 2.5 Z" fill="#222"/><path d="M8 16.5 A2 2 0 0 0 12 16.5 Z" fill="#222"/><path d="M2.5 2 L17.5 18" stroke="#bbbbbb" stroke-width="3.2"/><path d="M2.5 2 L17.5 18" stroke="#222" stroke-width="1.6"/></svg>
<svg class="abs" style="left:390px;top:18px" width="30" height="20" viewBox="0 0 30 20"><rect x="1" y="13" width="5" height="6.5" rx="1.3" fill="#222"/><rect x="8.5" y="9" width="5" height="10.5" rx="1.3" fill="#222"/><rect x="16" y="5" width="5" height="14.5" rx="1.3" fill="#222"/><rect x="23.5" y="1" width="5" height="18.5" rx="1.3" fill="#222"/></svg>
<svg class="abs" style="left:431px;top:19px" width="24" height="17" viewBox="0 0 24 17"><path d="M12 16.5 L0.5 4.8 C7 -1.2 17 -1.2 23.5 4.8 Z" fill="#222"/><path d="M3.3 7.8 C8.2 3.8 15.8 3.8 20.7 7.8" fill="none" stroke="#bbbbbb" stroke-width="1.5"/><path d="M6.3 11 C9.8 8.2 14.2 8.2 17.7 11" fill="none" stroke="#bbbbbb" stroke-width="1.5"/></svg>
<svg class="abs" style="left:464px;top:18px" width="41" height="19" viewBox="0 0 41 19"><rect x="0.5" y="0.5" width="36" height="18" rx="7" fill="#7e7e7e"/><path d="M3.5 2 V17" stroke="#e05a5a" stroke-width="1.6"/><rect x="37.5" y="6" width="2.5" height="7" rx="1" fill="#8a8a8a"/><text x="18.5" y="15" font-size="15" font-family="Liberation Sans" font-weight="bold" fill="#c4c4c4" text-anchor="middle">4</text></svg>
</div>
<div class="ab"><div class="ttl">輔助功能</div><svg class="abs" style="left:26px;top:23px" width="20" height="28" viewBox="0 0 20 28"><path d="M16 3 L5 14 L16 25" fill="none" stroke="#2b8be0" stroke-width="4"/></svg></div>
<div class="abs" style="left:6.3px;top:122px;width:176px;height:46px;border:1.8px solid #3a8fd8;border-radius:6px"></div>
<div class="c" style="left:9.3px;width:170px;top:135.0px;font-size:21px;line-height:21px;color:#2b8be0;">用神提示</div>
<div class="abs" style="left:182.3px;top:122px;width:176px;height:46px;border:1.8px solid #3a8fd8;border-radius:6px"></div>
<div class="c" style="left:185.3px;width:170px;top:135.0px;font-size:21px;line-height:21px;color:#2b8be0;">地支提示</div>
<div class="abs" style="left:357.8px;top:122px;width:176px;height:46px;border:1.8px solid #3a8fd8;border-radius:6px"></div>
<div class="c" style="left:360.8px;width:170px;top:135.0px;font-size:21px;line-height:21px;color:#2b8be0;">旺衰長生</div>
<div class="abs" style="left:6.3px;top:168px;width:176px;height:46px;border:1.8px solid #3a8fd8;border-radius:6px"></div>
<div class="c" style="left:9.3px;width:170px;top:181.0px;font-size:21px;line-height:21px;color:#2b8be0;">寄宮</div>
<div class="abs" style="left:182.3px;top:168px;width:176px;height:46px;border:1.8px solid #3a8fd8;border-radius:6px"></div>
<div class="c" style="left:185.3px;width:170px;top:181.0px;font-size:21px;line-height:21px;color:#2b8be0;">通道</div>
<div class="abs" style="left:357.8px;top:168px;width:176px;height:46px;border:1.8px solid #3a8fd8;border-radius:6px"></div>
<div class="c" style="left:360.8px;width:170px;top:181.0px;font-size:21px;line-height:21px;color:#2b8be0;">行年等</div>
<div class="abs" style="left:6.3px;top:214px;width:176px;height:46px;border:1.8px solid #3a8fd8;border-radius:6px"></div>
<div class="c" style="left:9.3px;width:170px;top:227.0px;font-size:21px;line-height:21px;color:#2b8be0;">日辰提示</div>
<div class="abs" style="left:182.3px;top:214px;width:176px;height:46px;border:1.8px solid #3a8fd8;border-radius:6px"></div>
<div class="c" style="left:185.3px;width:170px;top:227.0px;font-size:21px;line-height:21px;color:#2b8be0;">畢法提示</div>
<div class="abs" style="left:357.8px;top:214px;width:176px;height:46px;border:1.8px solid #3a8fd8;border-radius:6px"></div>
<div class="c" style="left:360.8px;width:170px;top:227.0px;font-size:21px;line-height:21px;color:#2b8be0;">課體提示</div>
<div class="card" style="left:13px;top:279.5px;width:514px;height:110px"><div class="ch" style="height:41px;font-size:21px;line-height:41px">用神提示</div></div>
<div class="t" style="left:33.5px;top:347.5px;font-size:23px;line-height:23px;color:#222;">用神類別</div><div class="t" style="right:91px;top:347.5px;font-size:23px;line-height:23px;color:#222;">人體疾病</div><div class="tri" style="left:475px;top:355px;border-top-color:#2b8be0"></div>
<div class="card" style="left:13px;top:416.5px;width:514px;height:94px"><div class="ch" style="height:40px;font-size:21px;line-height:40px">主要用神</div></div>
<div class="t" style="left:27.5px;top:474.1px;font-size:20.5px;line-height:20.5px;color:#2424b4;">隨機屏蔽。重新生成結果或者購買無廣告的版本。</div>
<div class="card" style="left:13px;top:537px;width:514px;height:700px"><div class="ch" style="height:40px;font-size:21px;line-height:40px">主要判別方法</div></div>
<div class="t" style="left:27.5px;top:595.0px;font-size:21px;line-height:21px;color:#111;font-weight:bold">占病</div>
<div class="t" style="left:27.5px;top:621.8px;font-size:21px;line-height:21px;color:#1a1a1a;">虎鬼居日上兩課，多主病在表；若居辰上兩課多主病</div>
<div class="t" style="left:27.5px;top:649.4px;font-size:21px;line-height:21px;color:#1a1a1a;">在裏。虎鬼居初傳，並在頭部及上身；虎鬼居中傳，</div>
<div class="t" style="left:27.5px;top:677.0px;font-size:21px;line-height:21px;color:#1a1a1a;">病在胸腰部；虎鬼居末傳，病在腿足及下半身。四墓</div>
<div class="t" style="left:27.5px;top:704.5px;font-size:21px;line-height:21px;color:#1a1a1a;">覆生，必是舊病再起；回環周遍亦同此斷。四下生其</div>
<div class="t" style="left:27.5px;top:732.1px;font-size:21px;line-height:21px;color:#1a1a1a;">四上名「源消根斷」，占病必因不攝食而致，全身氣</div>
<div class="t" style="left:27.5px;top:759.7px;font-size:21px;line-height:21px;color:#1a1a1a;">力耗盡。</div>
<div class="t" style="left:27.5px;top:787.3px;font-size:21px;line-height:21px;color:#1a1a1a;">卯加申、戌加卯，占病必是手足不舉或有傷。血支血</div>
<div class="t" style="left:27.5px;top:814.9px;font-size:21px;line-height:21px;color:#1a1a1a;">忌乘白虎或並病符克干，必主血病。兩蛇夾墓病積</div>
<div class="t" style="left:27.5px;top:842.4px;font-size:21px;line-height:21px;color:#1a1a1a;">塊。白虎乘日墓加臨干支年命者亦同此斷。</div>
<div class="t" style="left:27.5px;top:870.0px;font-size:21px;line-height:21px;color:#1a1a1a;">天鬼作鬼在六處，必患流行疾病。占病逢伏吟，疾病</div>
<div class="t" style="left:27.5px;top:897.6px;font-size:21px;line-height:21px;color:#1a1a1a;">恐潛伏。日祿閉口臨絕鄉，無法進食，若乘六合尤</div>
<div class="t" style="left:27.5px;top:925.2px;font-size:21px;line-height:21px;color:#1a1a1a;">的。</div>
<div class="t" style="left:27.5px;top:952.8px;font-size:21px;line-height:21px;color:#1a1a1a;">干上克支吉，支上克干凶。白虎乘死神、死氣加臨干</div>
<div class="t" style="left:27.5px;top:980.3px;font-size:21px;line-height:21px;color:#1a1a1a;">支克日無法解救者，必死。</div>
<div class="t" style="left:27.5px;top:1007.9px;font-size:21px;line-height:21px;color:#1a1a1a;">日干、年命上覆墓神或墓神發用，無沖墓之神解救</div>
<div class="t" style="left:27.5px;top:1035.5px;font-size:21px;line-height:21px;color:#1a1a1a;">者，病必死。久病日祿逢空陷者必死。凶煞滿課傳而</div>
<div class="t" style="left:27.5px;top:1063.1px;font-size:21px;line-height:21px;color:#1a1a1a;">內有吉日成患煞者，大凶。青龍為紙錢煞，大常為孝</div>
<div class="abs" style="left:0px;top:1075px;width:540px;height:63px;background:#f7f7f7"></div>
<div class="c" style="left:4.0px;width:100px;top:1095.5px;font-size:20px;line-height:20px;color:#828282;">盤面</div>
<div class="c" style="left:112.0px;width:100px;top:1095.5px;font-size:20px;line-height:20px;color:#2b8be0;">輔助</div>
<div class="c" style="left:220.0px;width:100px;top:1095.5px;font-size:20px;line-height:20px;color:#828282;">神煞</div>
<div class="c" style="left:328.0px;width:100px;top:1095.5px;font-size:20px;line-height:20px;color:#828282;">評註</div>
<div class="c" style="left:436.0px;width:100px;top:1095.5px;font-size:20px;line-height:20px;color:#828282;">檔案</div>
<div class="abs" style="left:108px;top:1135px;width:108px;height:3px;background:#2b8be0"></div>
<div class="nav">
<svg class="abs" style="left:144px;top:24px" width="15" height="14" viewBox="0 0 15 14"><path d="M1 1.5 H14 M1 7 H14 M1 12.5 H14" stroke="#444" stroke-width="1.6"/></svg>
<div class="abs" style="left:263px;top:25px;width:14px;height:13px;border:2px solid #444;border-radius:3px"></div>
<svg class="abs" style="left:381px;top:22px" width="11" height="18" viewBox="0 0 11 18"><path d="M9 1.5 L2.5 9 L9 16.5" fill="none" stroke="#444" stroke-width="1.7"/></svg>
</div>
</div>
</body></html>
